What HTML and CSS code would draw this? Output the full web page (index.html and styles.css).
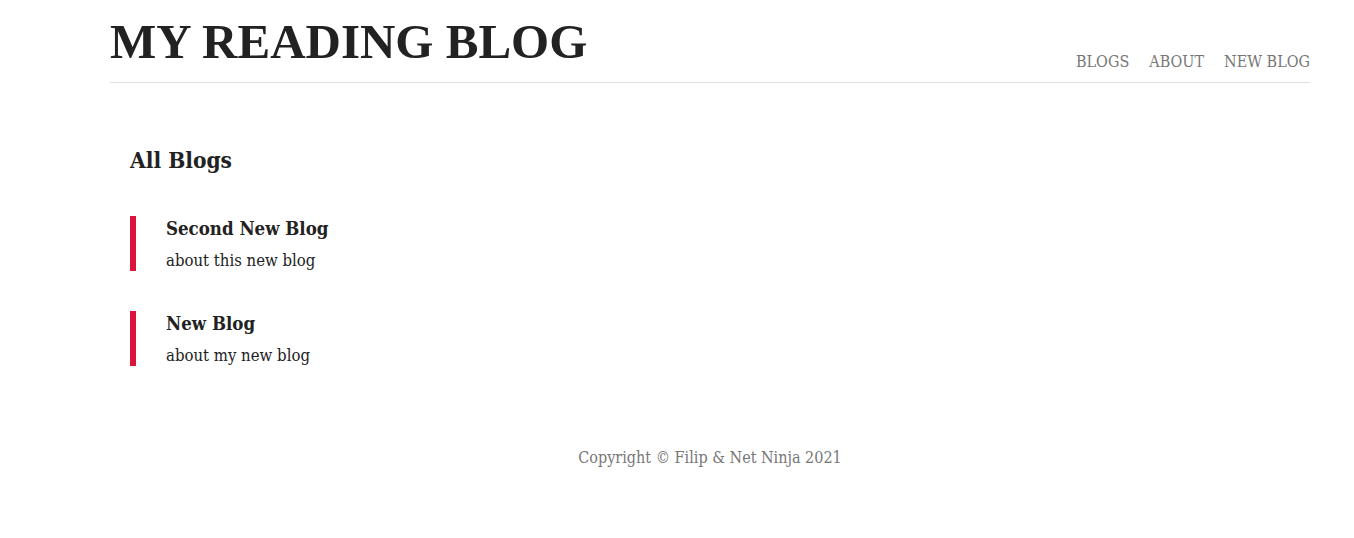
FILE: index.html
```html
<!DOCTYPE html>
<html lang="en">
<head>
<meta charset="utf-8">
<title>My Reading Blog</title>
<link rel="stylesheet" href="styles.css">
</head>
<body>
<div class="page">
  <header class="navbar">
    <h1 class="brand">MY READING BLOG</h1>
    <nav class="links">
      <a href="#">BLOGS</a>
      <a href="#">ABOUT</a>
      <a href="#">NEW BLOG</a>
    </nav>
  </header>
  <main class="content">
    <h2 class="section-title">All Blogs</h2>
    <div class="blog-list">
      <article class="blog-preview">
        <h3 class="blog-title">Second New Blog</h3>
        <p class="blog-snippet">about this new blog</p>
      </article>
      <article class="blog-preview">
        <h3 class="blog-title">New Blog</h3>
        <p class="blog-snippet">about my new blog</p>
      </article>
    </div>
  </main>
  <footer class="footer">Copyright © Filip &amp; Net Ninja 2021</footer>
</div>
</body>
</html>
```
FILE: styles.css
```css
* { box-sizing: border-box; }
body {
  margin: 0;
  background: #fff;
  color: #222;
  font-family: "DejaVu Serif Condensed", "DejaVu Serif", serif;
  font-size: 16px;
}
.page {
  width: 1200px;
  margin-left: 110px;
}
.navbar {
  display: flex;
  justify-content: space-between;
  align-items: flex-end;
  height: 83px;
  border-bottom: 1px solid #e0e0e0;
  padding-bottom: 11px;
}
.brand {
  margin: 0;
  font-family: "Liberation Serif", serif;
  font-weight: bold;
  font-size: 49px;
  line-height: 1;
  color: #222;
  align-self: flex-start;
  margin-top: 17px;
}
.links {
  display: flex;
  gap: 20px;
}
.links a {
  color: #777;
  text-decoration: none;
  font-size: 16px;
}
.content {
  padding: 64px 20px 0;
}
.section-title {
  margin: 0 0 43px;
  font-size: 22.5px;
  font-weight: bold;
}
.blog-list {
  display: flex;
  flex-direction: column;
  gap: 40px;
}
.blog-preview {
  border-left: 6px solid #dc143c;
  padding-left: 30px;
  height: 55px;
}
.blog-title {
  margin: 0;
  font-size: 18.5px;
  font-weight: bold;
  line-height: 26px;
}
.blog-snippet {
  margin: 7px 0 0;
  font-size: 16.6px;
  line-height: 24px;
}
.footer {
  text-align: center;
  color: #777;
  margin-top: 82px;
}
```
